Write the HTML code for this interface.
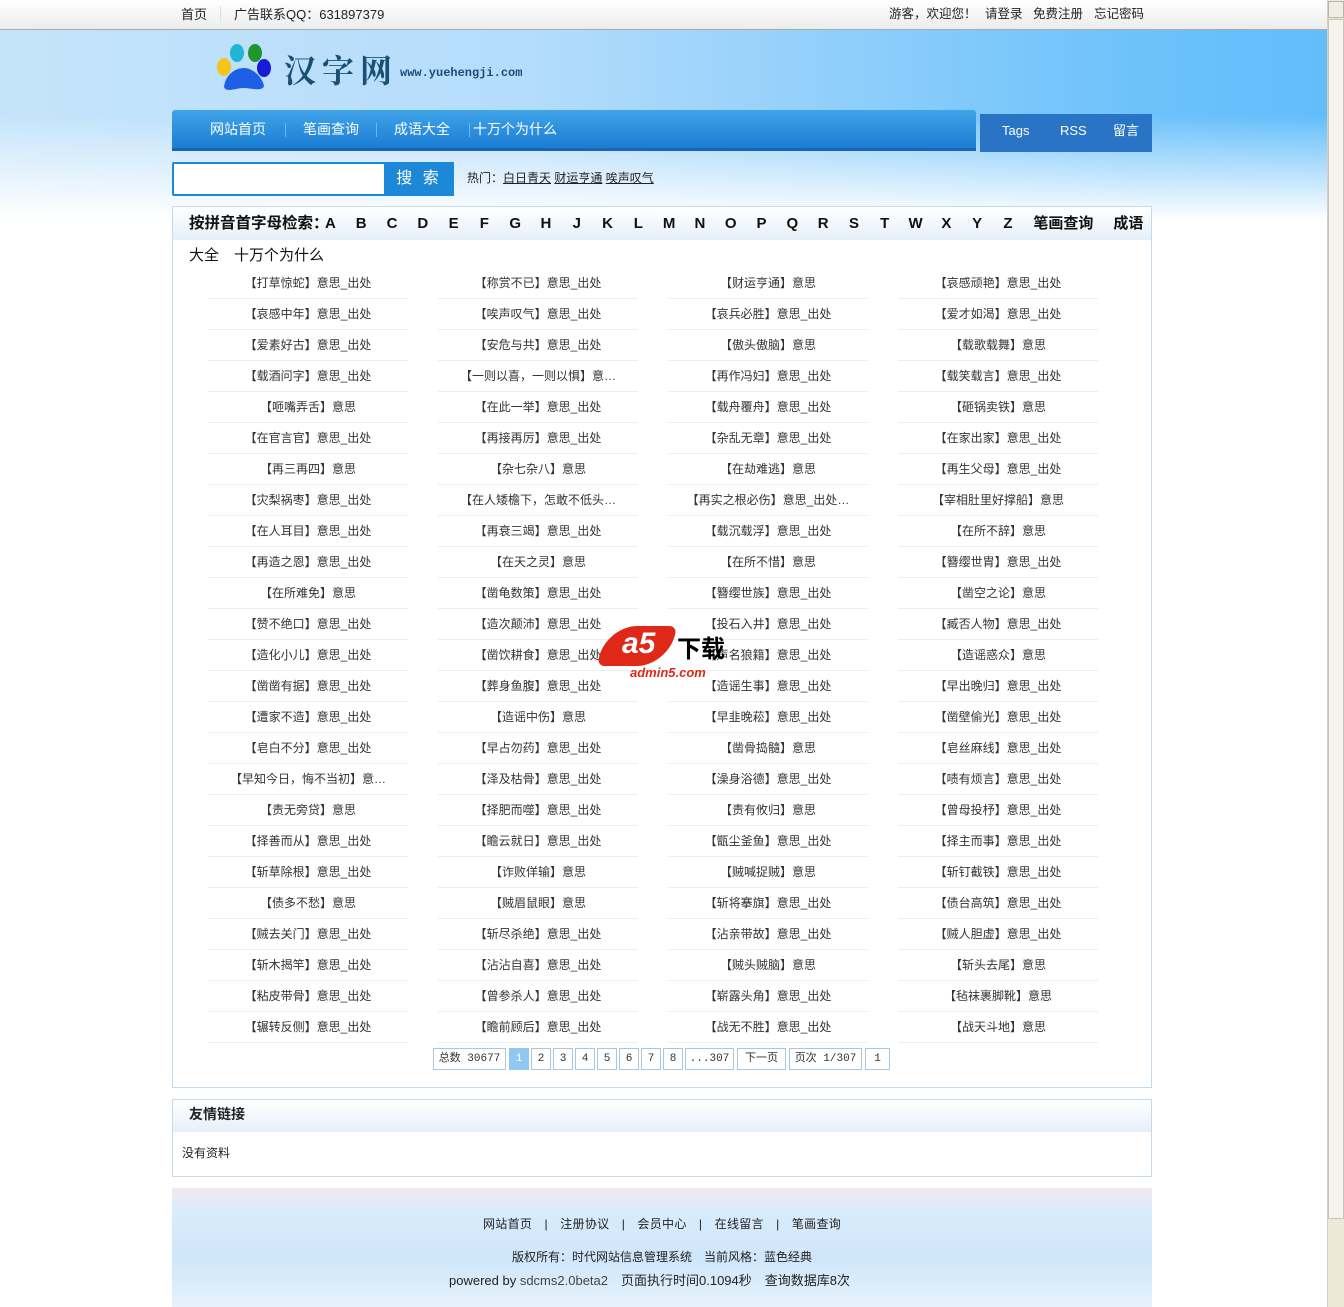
<!DOCTYPE html>
<html><head><meta charset="utf-8">
<style>
*{margin:0;padding:0;box-sizing:border-box}
body{width:1344px;height:1307px;overflow:hidden;position:relative;font-family:"Liberation Sans","Noto Sans CJK SC",sans-serif;font-size:12px;color:#222;background:#fff}
a{color:#222;text-decoration:none}
.top{position:absolute;left:0;top:0;width:1327px;height:30px;background:linear-gradient(#fff,#ececec);border-bottom:1px solid #a9a9a9}
.hdr{position:absolute;left:0;top:30px;width:1327px;height:190px;background:linear-gradient(to bottom,rgba(255,255,255,0) 0%,rgba(255,255,255,0) 45%,#fff 100%),linear-gradient(to right,#c5e4fb 0%,#b4dcfb 40%,#6ec2fb 85%,#62bdfb 100%)}
.sb{position:absolute;left:1327px;top:0;width:17px;height:1307px;background:#ece9d8;border-left:1px solid #d4d0c8}
.abs{position:absolute;white-space:nowrap;line-height:1.2}
.nav{position:absolute;left:172px;top:110px;width:804px;height:41px;background:linear-gradient(#3fa4ea,#1b7dd3);border-bottom:3px solid #1765b3;border-radius:3px 3px 0 0}
.nav span{position:absolute;top:11px;color:#fff;font-size:14px;line-height:1.2}
.nav i{position:absolute;top:13px;width:1px;height:14px;background:#6fb8ee}
.nav2{position:absolute;left:980px;top:114px;width:172px;height:38px;background:#2a74c6;color:#fff;font-size:13px}
.nav2 span{line-height:16px}
.box{position:absolute;left:172px;top:206px;width:980px;height:882px;border:1px solid #c5d9e6}
.bar{position:absolute;left:0;top:0;width:978px;height:33px;background:linear-gradient(#fff,#e6f0f8)}
ul{list-style:none;position:absolute;left:35px;top:61px;width:920px}
li{float:left;width:200px;height:31px;line-height:30px;margin-right:30px;text-align:center;border-bottom:1px solid #eee;font-size:12px;color:#333}
.pg{position:absolute;top:1048px;height:22px;line-height:20px;border:1px solid #a9c7de;font-size:11px;color:#333;text-align:center;font-family:"Liberation Mono","Noto Sans CJK SC",monospace}
.fl{position:absolute;left:172px;top:1099px;width:980px;height:78px;border:1px solid #c5d9e6}
.ft{position:absolute;left:172px;top:1188px;width:980px;height:119px;background:linear-gradient(#f3e8ee 0%,#d8ecfb 20%,#cfe6fa 60%,#e6f2fc 100%)}
.L{display:flex;align-items:baseline}
</style></head><body>
<div class="top"></div>
<div class="abs" style="left:181px;top:7px;font-size:13px">首页</div>
<div class="abs" style="left:220px;top:6px;width:1px;height:16px;background:#ddd"></div>
<div class="abs" style="left:234px;top:7px;font-size:13px">广告联系QQ：631897379</div>
<div class="abs" style="left:889px;top:7px;font-size:12.5px">游客，欢迎您！</div>
<div class="abs" style="left:985px;top:7px;font-size:12.5px">请登录</div>
<div class="abs" style="left:1033px;top:7px;font-size:12.5px">免费注册</div>
<div class="abs" style="left:1094px;top:7px;font-size:12.5px">忘记密码</div>
<div class="hdr"></div>
<svg class="abs" style="left:210px;top:40px" width="70" height="55" viewBox="210 40 70 55">
<ellipse cx="224" cy="67" rx="7" ry="9" fill="#f6c51c"/>
<ellipse cx="237" cy="53" rx="7" ry="9" fill="#1fb5d6"/>
<ellipse cx="255" cy="53" rx="7" ry="9" fill="#22962e"/>
<ellipse cx="264" cy="68" rx="7" ry="9" fill="#1a1bd8"/>
<path d="M224 87 C226 72 238 68 244 68 C252 68 262 76 264 86 C262 92 252 88 244 88 C236 88 226 93 224 87Z" fill="#1e5fe8"/>
</svg>
<div class="abs" style="left:284px;top:50px;font-family:'Noto Serif CJK SC',serif;font-size:32px;font-weight:bold;color:#1a4f74;letter-spacing:6px">汉字网</div>
<div class="abs" style="left:400px;top:66px;font-family:'Liberation Mono',monospace;font-size:12px;font-weight:bold;color:#1d4a78">www.yuehengji.com</div>
<div class="nav"><span style="left:38px">网站首页</span><i style="left:113px"></i><span style="left:131px">笔画查询</span><i style="left:204px"></i><span style="left:222px">成语大全</span><i style="left:297px"></i><span style="left:301px">十万个为什么</span></div>
<div class="nav2"><span class="abs" style="left:22px;top:9px">Tags</span><span class="abs" style="left:80px;top:9px">RSS</span><span class="abs" style="left:133px;top:9px">留言</span></div>
<div class="abs" style="left:172px;top:162px;width:282px;height:34px;border:2px solid #1e88d8;border-radius:2px;background:#fff"></div>
<div class="abs" style="left:384px;top:162px;width:70px;height:34px;background:#1e88d8;color:#fff;font-size:16px;text-align:center;line-height:34px;letter-spacing:3px">搜 索</div>
<div class="abs" style="left:467px;top:171px">热门：<u>白日青天</u> <u>财运亨通</u> <u>唉声叹气</u></div>
<div class="box"><div class="bar"></div>
<div class="abs L" style="left:16px;top:8px;font-weight:bold;color:#111"><span style="font-size:15.5px;width:126px">按拼音首字母检索：</span><span style="font-size:15px;display:flex"><span style="width:30.8px;text-align:center">A</span><span style="width:30.8px;text-align:center">B</span><span style="width:30.8px;text-align:center">C</span><span style="width:30.8px;text-align:center">D</span><span style="width:30.8px;text-align:center">E</span><span style="width:30.8px;text-align:center">F</span><span style="width:30.8px;text-align:center">G</span><span style="width:30.8px;text-align:center">H</span><span style="width:30.8px;text-align:center">J</span><span style="width:30.8px;text-align:center">K</span><span style="width:30.8px;text-align:center">L</span><span style="width:30.8px;text-align:center">M</span><span style="width:30.8px;text-align:center">N</span><span style="width:30.8px;text-align:center">O</span><span style="width:30.8px;text-align:center">P</span><span style="width:30.8px;text-align:center">Q</span><span style="width:30.8px;text-align:center">R</span><span style="width:30.8px;text-align:center">S</span><span style="width:30.8px;text-align:center">T</span><span style="width:30.8px;text-align:center">W</span><span style="width:30.8px;text-align:center">X</span><span style="width:30.8px;text-align:center">Y</span><span style="width:30.8px;text-align:center">Z</span></span><span style="font-size:15px;margin-left:10px">笔画查询</span><span style="font-size:15px;margin-left:20px">成语</span></div>
<div class="abs" style="left:16px;top:40px;font-size:15px;color:#111">大全　十万个为什么</div>
<ul>
<li>【打草惊蛇】意思_出处</li><li>【称赏不已】意思_出处</li><li>【财运亨通】意思</li><li>【哀感顽艳】意思_出处</li>
<li>【哀感中年】意思_出处</li><li>【唉声叹气】意思_出处</li><li>【哀兵必胜】意思_出处</li><li>【爱才如渴】意思_出处</li>
<li>【爱素好古】意思_出处</li><li>【安危与共】意思_出处</li><li>【傲头傲脑】意思</li><li>【载歌载舞】意思</li>
<li>【载酒问字】意思_出处</li><li>【一则以喜，一则以惧】意…</li><li>【再作冯妇】意思_出处</li><li>【载笑载言】意思_出处</li>
<li>【咂嘴弄舌】意思</li><li>【在此一举】意思_出处</li><li>【载舟覆舟】意思_出处</li><li>【砸锅卖铁】意思</li>
<li>【在官言官】意思_出处</li><li>【再接再厉】意思_出处</li><li>【杂乱无章】意思_出处</li><li>【在家出家】意思_出处</li>
<li>【再三再四】意思</li><li>【杂七杂八】意思</li><li>【在劫难逃】意思</li><li>【再生父母】意思_出处</li>
<li>【灾梨祸枣】意思_出处</li><li>【在人矮檐下，怎敢不低头…</li><li>【再实之根必伤】意思_出处…</li><li>【宰相肚里好撑船】意思</li>
<li>【在人耳目】意思_出处</li><li>【再衰三竭】意思_出处</li><li>【载沉载浮】意思_出处</li><li>【在所不辞】意思</li>
<li>【再造之恩】意思_出处</li><li>【在天之灵】意思</li><li>【在所不惜】意思</li><li>【簪缨世胄】意思_出处</li>
<li>【在所难免】意思</li><li>【凿龟数策】意思_出处</li><li>【簪缨世族】意思_出处</li><li>【凿空之论】意思</li>
<li>【赞不绝口】意思_出处</li><li>【造次颠沛】意思_出处</li><li>【投石入井】意思_出处</li><li>【臧否人物】意思_出处</li>
<li>【造化小儿】意思_出处</li><li>【凿饮耕食】意思_出处</li><li>【声名狼籍】意思_出处</li><li>【造谣惑众】意思</li>
<li>【凿凿有据】意思_出处</li><li>【葬身鱼腹】意思_出处</li><li>【造谣生事】意思_出处</li><li>【早出晚归】意思_出处</li>
<li>【遭家不造】意思_出处</li><li>【造谣中伤】意思</li><li>【早韭晚菘】意思_出处</li><li>【凿壁偷光】意思_出处</li>
<li>【皂白不分】意思_出处</li><li>【早占勿药】意思_出处</li><li>【凿骨捣髓】意思</li><li>【皂丝麻线】意思_出处</li>
<li>【早知今日，悔不当初】意…</li><li>【泽及枯骨】意思_出处</li><li>【澡身浴德】意思_出处</li><li>【啧有烦言】意思_出处</li>
<li>【责无旁贷】意思</li><li>【择肥而噬】意思_出处</li><li>【责有攸归】意思</li><li>【曾母投杼】意思_出处</li>
<li>【择善而从】意思_出处</li><li>【瞻云就日】意思_出处</li><li>【甑尘釜鱼】意思_出处</li><li>【择主而事】意思_出处</li>
<li>【斩草除根】意思_出处</li><li>【诈败佯输】意思</li><li>【贼喊捉贼】意思</li><li>【斩钉截铁】意思_出处</li>
<li>【债多不愁】意思</li><li>【贼眉鼠眼】意思</li><li>【斩将搴旗】意思_出处</li><li>【债台高筑】意思_出处</li>
<li>【贼去关门】意思_出处</li><li>【斩尽杀绝】意思_出处</li><li>【沾亲带故】意思_出处</li><li>【贼人胆虚】意思_出处</li>
<li>【斩木揭竿】意思_出处</li><li>【沾沾自喜】意思_出处</li><li>【贼头贼脑】意思</li><li>【斩头去尾】意思</li>
<li>【粘皮带骨】意思_出处</li><li>【曾参杀人】意思_出处</li><li>【崭露头角】意思_出处</li><li>【毡袜裹脚靴】意思</li>
<li>【辗转反侧】意思_出处</li><li>【瞻前顾后】意思_出处</li><li>【战无不胜】意思_出处</li><li>【战天斗地】意思</li>
</ul></div>
<div class="pg" style="left:433px;width:73px">总数 30677</div>
<div class="pg" style="left:509px;width:20px;background:#8fc8f0;color:#fff;border-color:#8fc8f0">1</div>
<div class="pg" style="left:531px;width:20px">2</div>
<div class="pg" style="left:553px;width:20px">3</div>
<div class="pg" style="left:575px;width:20px">4</div>
<div class="pg" style="left:597px;width:20px">5</div>
<div class="pg" style="left:619px;width:20px">6</div>
<div class="pg" style="left:641px;width:20px">7</div>
<div class="pg" style="left:663px;width:20px">8</div>
<div class="pg" style="left:685px;width:49px">...307</div>
<div class="pg" style="left:737px;width:49px">下一页</div>
<div class="pg" style="left:789px;width:73px">页次 1/307</div>
<div class="pg" style="left:865px;width:25px">1</div>
<div class="abs" style="left:602px;top:626px;width:70px;height:40px;background:#e02818;border-radius:30px 8px 30px 8px;transform:skewX(-15deg)"></div>
<div class="abs" style="left:622px;top:626px;font-size:30px;font-weight:bold;color:#fff;font-style:italic">a5</div>
<div class="abs" style="left:677px;top:636px;font-size:24px;font-weight:bold;color:#000">下载</div>
<div class="abs" style="left:630px;top:665px;font-size:13px;font-weight:bold;color:#e02818;font-style:italic">admin5.com</div>
<div class="fl"><div class="abs" style="left:0;top:0;width:978px;height:32px;background:linear-gradient(#fff,#e6f0f8)"></div>
<div class="abs" style="left:16px;top:6px;font-size:14px;font-weight:bold">友情链接</div>
<div class="abs" style="left:9px;top:46px">没有资料</div></div>
<div class="ft"></div>
<div class="abs" style="left:483px;top:1217px;letter-spacing:0.3px">网站首页　|　注册协议　|　会员中心　|　在线留言　|　笔画查询</div>
<div class="abs" style="left:512px;top:1250px">版权所有：时代网站信息管理系统　当前风格：蓝色经典</div>
<div class="abs" style="left:449px;top:1273px;font-size:13px">powered by <span style="color:#444">sdcms2.0beta2</span>　页面执行时间0.1094秒　查询数据库8次</div>
<div class="sb"><div style="width:16px;height:17px;background:#f0efe6;border:1px solid #b8b4a8;margin-top:1px"></div><div style="width:16px;height:1200px;background:#f4f3ee;border:1px solid #c8c4b8;margin-top:1px"></div></div>
</body></html>
